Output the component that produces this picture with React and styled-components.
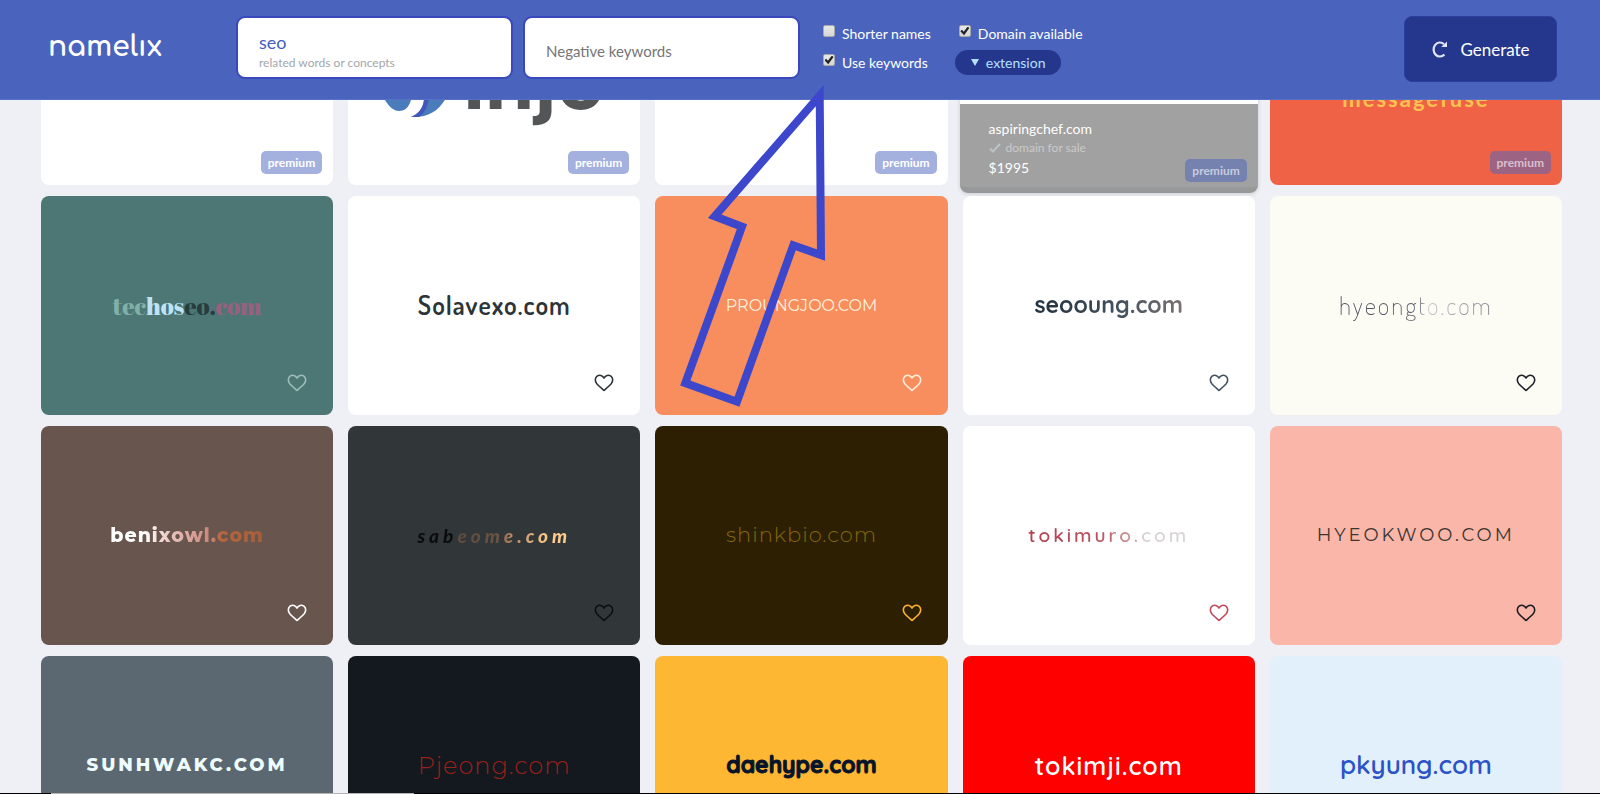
import React from 'react'
import styled, { createGlobalStyle } from 'styled-components'

const names = [
  { text: '', premium: true },
  { text: 'injo', premium: true, mark: true, font: 'inter', size: 80, weight: 700, color: '#545556', drop: 8 },
  { text: '', premium: true },
  { text: '', premium: true, offer: { domain: 'aspiringchef.com', price: '$1995' } },
  { text: 'messagefuse', premium: true, bg: '#f06246', font: 'lato', size: 22, weight: 700, color: '#fdc352', track: 2, drop: 46 },

  { parts: [['tec', '#82b0a6'], ['hos', '#bfe3f5'], ['eo.', '#263c41'], ['com', '#98607f']], bg: '#4c7775', font: 'fat', size: 24, weight: 400, heart: '#9dbdb8' },
  { text: 'Solavexo.com', font: 'narrow', size: 26, weight: 600, color: '#2c3439', track: 1, heart: '#2c3439' },
  { text: 'PROUNGJOO.COM', bg: '#f88d5d', font: 'mont', size: 16, weight: 400, color: '#fff1dc', heart: '#fff1dc' },
  { text: 'seooung.com', font: 'quick', size: 23, weight: 700, color: 'linear-gradient(90deg, #22303f, #45525f 60%, #7b7272)', heart: '#45525f' },
  { text: 'hyeongto.com', bg: '#fcfcf4', font: 'narrow', size: 25, weight: 200, color: 'linear-gradient(90deg, #4a4d58, #5b5e6b 52%, #c9cad0 56%, #777985)', track: 2, heart: '#1e2129' },

  { text: 'benixowl.com', bg: '#68564e', font: 'mont', size: 19, weight: 800, color: 'linear-gradient(90deg, #fff 22%, #e9c3bb 40%, #c98278 66%, #b4663f 72%, #a45f38)', track: 1, heart: '#ffffff' },
  { text: 'sabeome.com', bg: '#313739', font: 'lato', size: 19, weight: 900, italic: true, color: 'linear-gradient(90deg, #0c0c0d 25%, #5c4a3f 27%, #6a5345 52%, #b88966 62%, #ffcb8c 86%)', track: 4, heart: '#0c0f11' },
  { text: 'shinkbio.com', bg: '#2c1f02', font: 'mont', size: 21, weight: 300, color: '#86670f', track: 1, heart: '#fdb22f' },
  { text: 'tokimuro.com', font: 'quick', size: 19, weight: 600, color: 'linear-gradient(90deg, #b93d4f, #bb5560 45%, #caa3a3 66%, #d8d3d5 72%)', track: 3, heart: '#c04a5c' },
  { text: 'HYEOKWOO.COM', bg: '#f9b6a9', font: 'mont', size: 18, weight: 400, color: '#3b3530', track: 3, heart: '#1b1c20' },

  { text: 'SUNHWAKC.COM', bg: '#5b6871', font: 'mont', size: 18, weight: 800, color: '#eefcff', track: 3 },
  { text: 'Pjeong.com', bg: '#14181f', font: 'mont', size: 24, weight: 300, color: '#9a201a', track: 1 },
  { text: 'daehype.com', bg: '#feb732', font: 'quick', size: 23, weight: 700, color: '#07142b', bold: true },
  { text: 'tokimji.com', bg: '#fe0000', font: 'quick', size: 25, weight: 600, color: '#ffffff', track: 1 },
  { text: 'pkyung.com', bg: '#e1f0fb', font: 'quick', size: 26, weight: 600, color: '#2b52c6' },
]

const fonts = {
  lato: 'Lato, "Liberation Sans", sans-serif',
  inter: 'Inter, "Liberation Sans", sans-serif',
  mont: 'Montserrat, Lato, sans-serif',
  quick: 'Quicksand, Comfortaa, Lato, sans-serif',
  narrow: 'Dosis, "Roboto Condensed", Roboto, sans-serif',
  fat: '"Abril Fatface", "Liberation Serif", serif',
}

const HeartIcon = () => (
  <svg width="20" height="18" viewBox="0 0 20 18" fill="none" stroke="currentColor" strokeWidth="1.6" strokeLinejoin="round">
    <path d="M10 16.4 C8.2 14.8 4.6 11.8 2.8 9.7 C0.6 7 1 3.8 3.1 2.2 C5.4 0.5 8.4 1.2 10 4 C11.6 1.2 14.6 0.5 16.9 2.2 C19 3.8 19.4 7 17.2 9.7 C15.4 11.8 11.8 14.8 10 16.4 Z" />
  </svg>
)

const InjoMark = () => (
  <svg width="66" height="84" viewBox="0 0 66 84" aria-hidden="true">
    <path d="M0 62 C5 73 11 77 16 77 C23 77 27 72 29 62 L29 30 L0 30 Z" fill="#4a7cbc" />
    <path d="M28 83 C37 79 42 72 41 60 L42 34 L68 34 L64 62 C57 76 46 84 28 83 Z" fill="#4a7cbc" />
    <path d="M28 83 C37 79 42 72 41 60 L46 60 C46 70 43 78 36 83 Z" fill="#4156b8" />
  </svg>
)

const App = () => {
  return (
    <Page>
      <GlobalStyle />
      <Header>
        <Brand href="#">namelıx</Brand>
        <Fields>
          <Field>
            <FieldInput aria-label="Keywords" defaultValue="seo" />
            <Hint>related words or concepts</Hint>
          </Field>
          <Field>
            <FieldInput aria-label="Negative keywords" placeholder="Negative keywords" />
          </Field>
        </Fields>
        <Options>
          <Option><Tick type="checkbox" />Shorter names</Option>
          <Option><Tick type="checkbox" defaultChecked />Domain available</Option>
          <Option><Tick type="checkbox" defaultChecked />Use keywords</Option>
          <Extension type="button"><Caret />extension</Extension>
        </Options>
        <Generate type="button">
          <svg width="17" height="18" viewBox="0 0 17 18" fill="none" stroke="#dfe6ff" strokeWidth="2.2">
            <path d="M13.4 14.4 A6.3 7 0 1 1 13 4.2" />
            <path d="M16 1.4 V7 H10.2 Z" fill="#dfe6ff" stroke="none" />
          </svg>
          Generate
        </Generate>
      </Header>

      <Results>
        <Grid>
          {names.map((item, i) => (
            <Card key={i} $bg={item.bg} $raised={!!item.offer}>
              {item.mark && <InjoMark />}
              {(item.text || item.parts) && (
                <Name
                  $font={fonts[item.font]}
                  $size={item.size}
                  $weight={item.weight}
                  $color={item.color}
                  $track={item.track}
                  $italic={item.italic}
                  $drop={item.drop}
                  $bold={item.bold}
                >
                  {item.parts
                    ? item.parts.map(([text, color]) => <Part key={text} $color={color}>{text}</Part>)
                    : item.text}
                </Name>
              )}
              {item.heart && (
                <Heart type="button" aria-label="Save name" $color={item.heart}><HeartIcon /></Heart>
              )}
              {item.offer && (
                <Offer>
                  <OfferLine>{item.offer.domain}</OfferLine>
                  <OfferNote>
                    <svg width="12" height="10" viewBox="0 0 12 10" fill="none" stroke="#bac4c4" strokeWidth="2">
                      <path d="M1 5.5 L4 8.5 L11 1" />
                    </svg>
                    domain for sale
                  </OfferNote>
                  <OfferLine>{item.offer.price}</OfferLine>
                </Offer>
              )}
              {item.premium && <Premium $faded={!!item.bg || !!item.offer}>premium</Premium>}
            </Card>
          ))}
        </Grid>
      </Results>

      <Pointer width="160" height="330" viewBox="0 0 160 330" aria-hidden="true">
        <path d="M144.7 15.7 L39.7 136.3 L67 146.7 L10.3 303 L62 321.7 L118.3 165.3 L146 175 Z" />
      </Pointer>
      <BottomBar />
    </Page>
  )
}

const GlobalStyle = createGlobalStyle`
  * {
    box-sizing: border-box;
  }
  body {
    margin: 0;
    background: #eef0f5;
    font-family: Lato, "Liberation Sans", sans-serif;
  }
  button, input {
    font-family: inherit;
  }
`

const Page = styled.div`
  position: relative;
  display: flex;
  flex-direction: column;
  height: 100vh;
  overflow: hidden;
`

const Header = styled.header`
  display: flex;
  align-items: flex-start;
  flex: none;
  padding: 16px 43px 17px 48px;
  background: #4a64bd;
  border-bottom: 1px solid #5871c6;
  position: relative;
  z-index: 2;
`

const Brand = styled.a`
  width: 188px;
  padding-top: 13px;
  color: #fff;
  font-family: Comfortaa, Quicksand, Lato, sans-serif;
  font-size: 28px;
  font-weight: 700;
  line-height: 36px;
  text-decoration: none;
`

const Fields = styled.div`
  display: flex;
  gap: 10px;
`

const Field = styled.div`
  display: flex;
  flex-direction: column;
  justify-content: center;
  width: 277px;
  height: 63px;
  padding: 4px 21px 0;
  background: #fff;
  border: 2px solid #3a48bd;
  border-radius: 9px;
`

const FieldInput = styled.input`
  width: 100%;
  height: 26px;
  padding: 0;
  border: none;
  outline: none;
  background: none;
  color: #4560bd;
  font-size: 18px;

  &::placeholder {
    color: #757575;
    font-size: 15px;
    opacity: 1;
  }
`

const Hint = styled.span`
  color: #a3a6ab;
  font-size: 12px;
  line-height: 16px;
`

const Options = styled.div`
  display: grid;
  grid-template-columns: auto auto;
  column-gap: 24px;
  align-items: center;
  margin-left: 22px;
  padding-top: 3px;
`

const Option = styled.label`
  display: flex;
  align-items: center;
  gap: 7px;
  height: 29px;
  padding-left: 1px;
  color: #fff;
  font-size: 14px;

  &:nth-child(2) {
    padding-left: 4px;
  }
`

const Tick = styled.input`
  appearance: none;
  display: grid;
  place-items: center;
  width: 12px;
  height: 12px;
  margin: 0 0 5px;
  background: linear-gradient(#e8e8e8, #d6d6d6);
  border: 1px solid #a9a9a9;
  border-radius: 2px;

  &:checked::after {
    content: '';
    width: 9px;
    height: 9px;
    background: #222;
    clip-path: polygon(0 52%, 18% 36%, 38% 58%, 82% 0, 100% 16%, 42% 96%);
  }
`

const Extension = styled.button`
  display: flex;
  align-items: center;
  gap: 7px;
  justify-self: start;
  height: 25px;
  padding: 0 16px;
  border: none;
  border-radius: 13px;
  background: #24378d;
  color: #b5e0ff;
  font-size: 14px;
`

const Caret = styled.i`
  border: 4px solid transparent;
  border-top: 7px solid #b5e0ff;
  border-bottom: 0;
`

const Generate = styled.button`
  display: flex;
  align-items: center;
  justify-content: center;
  gap: 12px;
  width: 153px;
  height: 66px;
  margin-left: auto;
  border: 1px solid #2b3f9c;
  border-radius: 8px;
  background: #24378d;
  color: #fff;
  font-size: 17px;
`

const Results = styled.main`
  flex: 1;
  min-height: 0;
  overflow: hidden;
`

// the list is scrolled part of the way through its first row
const Grid = styled.div`
  display: grid;
  grid-template-columns: repeat(5, 1fr);
  grid-auto-rows: 219px;
  gap: 11px 15px;
  margin-top: -134px;
  padding: 0 38px 0 41px;
`

const Card = styled.article`
  position: relative;
  display: flex;
  align-items: center;
  justify-content: center;
  gap: 14px;
  margin: ${({ $raised }) => ($raised ? '0 -3px -8px' : '0')};
  background: ${({ $bg }) => $bg || '#fff'};
  border-radius: 8px;
  box-shadow: ${({ $raised }) => ($raised ? '0 1px 4px rgba(0, 0, 0, 0.15)' : 'none')};
`

const Name = styled.h2`
  margin: 0;
  padding-top: ${({ $drop }) => $drop || 0}px;
  font-family: ${({ $font }) => $font};
  font-size: ${({ $size }) => $size}px;
  font-weight: ${({ $weight }) => $weight};
  font-style: ${({ $italic }) => ($italic ? 'italic' : 'normal')};
  letter-spacing: ${({ $track }) => $track || 0}px;
  -webkit-text-stroke: ${({ $bold }) => ($bold ? '1px #07142b' : '0')};
  line-height: 1.25;
  ${({ $color = '#fff' }) =>
    $color.startsWith('linear')
      ? `background: ${$color}; -webkit-background-clip: text; background-clip: text; color: transparent;`
      : `color: ${$color};`}
`

const Part = styled.span`
  color: ${({ $color }) => $color};
`

const Heart = styled.button`
  position: absolute;
  right: 26px;
  bottom: 23px;
  display: flex;
  padding: 0;
  border: none;
  background: none;
  color: ${({ $color }) => $color};
`

const Premium = styled.span`
  position: absolute;
  right: 11px;
  bottom: 11px;
  padding: 0 7px;
  border-radius: 5px;
  background: ${({ $faded }) => ($faded ? 'rgba(74, 100, 189, 0.5)' : '#a4b1de')};
  color: ${({ $faded }) => ($faded ? 'rgba(255, 255, 255, 0.6)' : '#fff')};
  font-size: 12px;
  font-weight: 700;
  line-height: 23px;
`

const Offer = styled.div`
  align-self: flex-end;
  flex: 1;
  padding: 15px 29px 10px;
  background: #a1a1a1;
  border-bottom: 6px solid #979899;
  border-radius: 0 0 8px 8px;
  color: #fff;
`

const OfferLine = styled.p`
  margin: 0;
  font-size: 14px;
  line-height: 19px;
`

const OfferNote = styled.p`
  display: flex;
  align-items: center;
  gap: 5px;
  margin: 0;
  color: #cacaca;
  font-size: 12px;
  line-height: 20px;
`

const Pointer = styled.svg`
  position: absolute;
  left: 675px;
  top: 80px;
  z-index: 3;
  fill: none;
  stroke: #3d47cc;
  stroke-width: 8;
  pointer-events: none;
`

const BottomBar = styled.footer`
  flex: none;
  height: 1px;
  background: linear-gradient(90deg, #000 51px, #b5b5b5 51px, #b5b5b5 414px, #000 414px);
`

export default App
